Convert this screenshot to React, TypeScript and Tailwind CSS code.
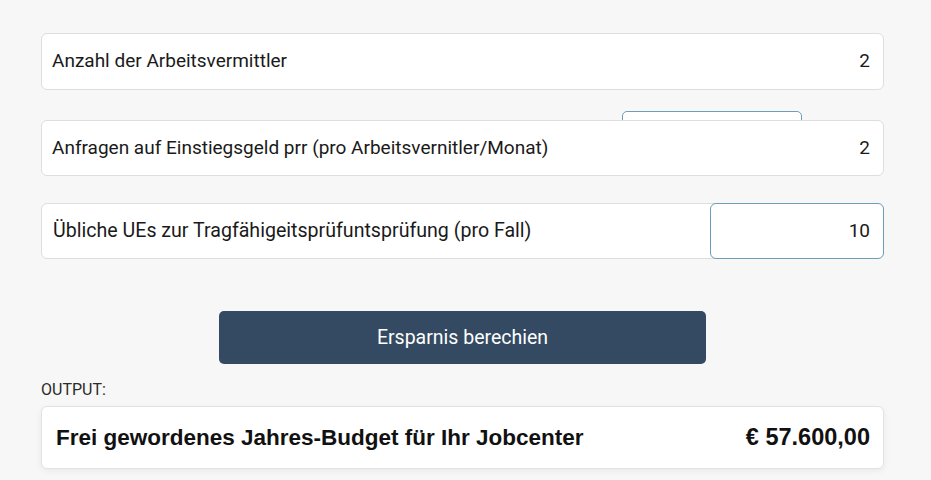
import React from "react";

const roboto = { fontFamily: "Roboto, 'Noto Sans', sans-serif" };

export default function App() {
  return (
    <div
      className="w-[931px] h-[480px] bg-[#f7f7f7] pl-[41px] pr-[47px] pt-[33px] overflow-hidden text-[#1a1a1a]"
      style={roboto}
    >
      <div className="relative flex flex-col">
        <div className="absolute left-[581px] top-[78px] w-[180px] h-[20px] rounded-[5px] border-[1.5px] border-[#6d9eb9] bg-white z-0" />

        <div className="relative z-10 h-[57px] flex items-center justify-between rounded-[6px] border border-[#dedede] bg-white pl-[10px] pr-[13px]">
          <span className="text-[19px]">Anzahl der Arbeitsvermittler</span>
          <span className="text-[19px]">2</span>
        </div>

        <div className="relative z-10 mt-[30px] h-[56px] flex items-center justify-between rounded-[6px] border border-[#dedede] bg-white pl-[10px] pr-[13px]">
          <span className="text-[19px]">Anfragen auf Einstiegsgeld prr (pro Arbeitsvernitler/Monat)</span>
          <span className="text-[19px]">2</span>
        </div>

        <div className="relative z-10 mt-[27px] h-[56px] flex items-center justify-between rounded-[6px] border border-[#dedede] bg-white pl-[11px]">
          <span className="text-[19.6px]">Übliche UEs zur Tragfähigeitsprüfuntsprüfung (pro Fall)</span>
          <div className="h-[56px] -my-px -mr-px w-[174px] flex items-center justify-end rounded-[6px] border-[1.5px] border-[#6d9eb9] bg-white pr-[13px]">
            <span className="text-[19px]">10</span>
          </div>
        </div>

        <div className="mt-[52px] flex justify-center">
          <button className="w-[487px] h-[53px] rounded-[5px] bg-[#334a62] text-white text-[19.5px] flex items-center justify-center">
            Ersparnis berechien
          </button>
        </div>

        <div className="mt-[16px] text-[16px] leading-[19px] text-[#2a2a2a]">OUTPUT:</div>

        <div
          className="mt-[7px] h-[63px] flex items-center justify-between rounded-[6px] border border-[#e2e2e2] bg-white pl-[14px] pr-[13px] shadow-[0_2px_6px_rgba(0,0,0,0.06)]"
          style={{ fontFamily: "'Liberation Sans', Arial, sans-serif" }}
        >
          <span className="text-[22.5px] font-bold text-[#111]">Frei gewordenes Jahres-Budget für Ihr Jobcenter</span>
          <span className="text-[23.5px] font-bold text-[#111]">€ 57.600,00</span>
        </div>
      </div>
    </div>
  );
}
